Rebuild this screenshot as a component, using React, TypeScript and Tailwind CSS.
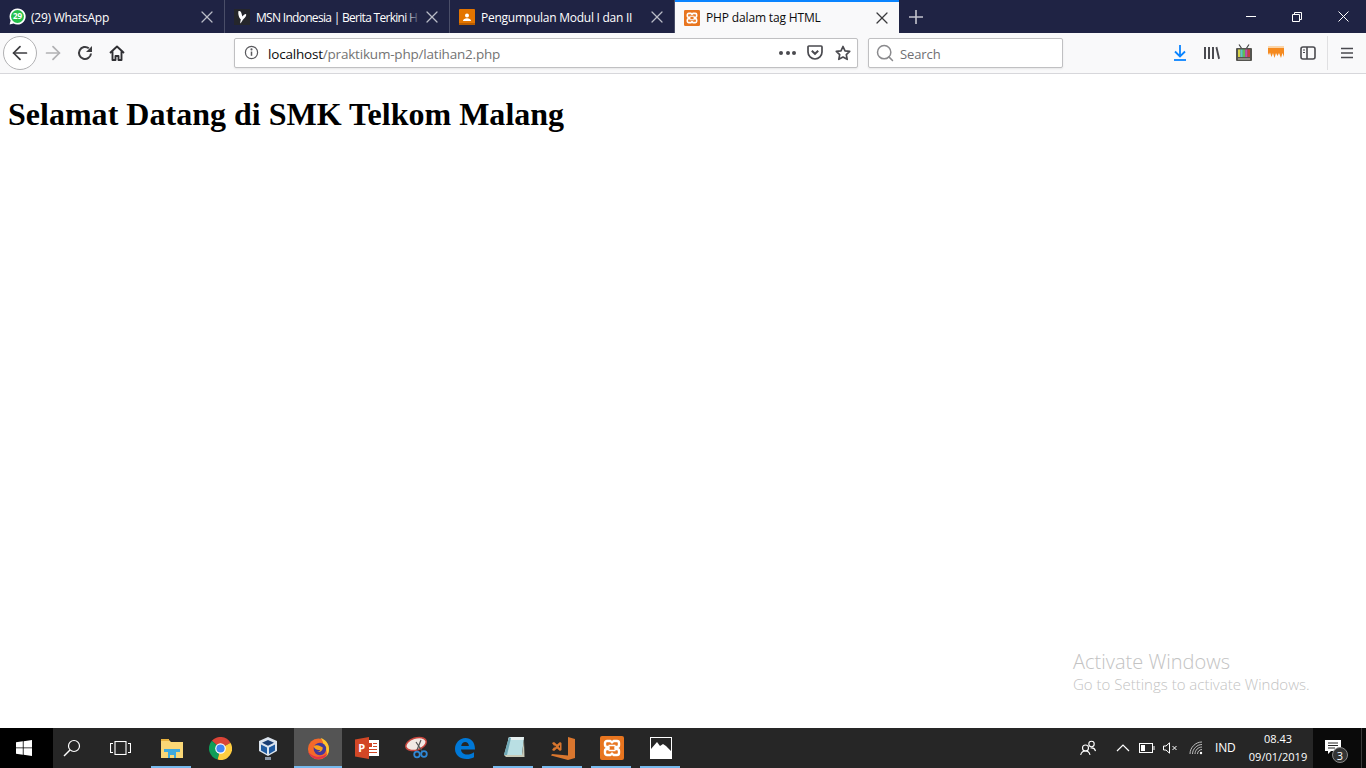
import { ArrowLeft, ArrowRight, Search, X } from 'lucide-react'
import type { ReactNode } from 'react'

const ui = { fontFamily: '"Open Sans", "Noto Sans", sans-serif' }

function XamppIcon({ size = 16 }: { size?: number }) {
  return (
    <svg width={size} height={size} viewBox="0 0 24 24">
      <rect width="24" height="24" rx="2" fill="#e8751f" />
      <path
        d="M7 5h3.500L12 6.500 13.500 5H17a2 2 0 0 1 2 2v2a2 2 0 0 1-2 2h-1.500v2H17a2 2 0 0 1 2 2v2a2 2 0 0 1-2 2h-3.500L12 17.500 10.500 19H7a2 2 0 0 1-2-2v-2a2 2 0 0 1 2-2h1.500v-2H7a2 2 0 0 1-2-2V7a2 2 0 0 1 2-2z"
        fill="none"
        stroke="#fff"
        strokeWidth="2.400"
        strokeLinejoin="round"
      />
      <path d="M8.500 9.500h7M8.500 14.500h7" stroke="#fff" strokeWidth="1.600" />
    </svg>
  )
}

function WhatsAppIcon() {
  return (
    <svg width="17" height="17" viewBox="0 0 17 17">
      <path d="M8.5 .5a8 8 0 0 0-6.900 12L.6 16.400l4-1a8 8 0 1 0 3.900-14.900z" fill="#fff" />
      <circle cx="8.500" cy="8.500" r="6.500" fill="#25c04a" />
      <text x="8.500" y="11.300" textAnchor="middle" fontSize="8" fontWeight="700" fill="#fff" fontFamily="Open Sans, sans-serif">29</text>
    </svg>
  )
}

function MsnIcon() {
  return (
    <svg width="16" height="16" viewBox="0 0 16 16">
      <rect width="16" height="16" fill="#25262b" />
      <path d="M4.500 2c1.500-.5 2.800.5 3.300 3.500.3 1 .5 1.500.7 2C9.500 6 10.500 5 11.800 5c1 .5.200 2.500-1 3.800-1 1-2 1.800-2.500 3L6.500 14.500c-.5-1 0-2.500.4-4C5 9 3.800 5 4.500 2z" fill="#fff" />
    </svg>
  )
}

function ClassroomIcon() {
  return (
    <svg width="16" height="16" viewBox="0 0 16 16">
      <rect width="16" height="16" rx="1" fill="#e37400" />
      <circle cx="8" cy="6.500" r="2" fill="#fff" />
      <path d="M4 12c0-2 2-2.800 4-2.800s4 .8 4 2.800z" fill="#fff" />
      <rect y="14" width="16" height="2" fill="#b85c00" />
    </svg>
  )
}

function Tab({ icon, title, active, fade }: { icon: ReactNode; title: string; active?: boolean; fade?: boolean }) {
  return (
    <div
      className={
        active
          ? 'flex h-[33px] w-[224px] items-center border-t-2 border-[#0a84ff] bg-[#f9f9fa] pl-[9px] text-[#0c0c0d]'
          : 'flex h-[33px] w-[225px] items-center border-r border-[#4a4e68] pl-[9px] text-white'
      }
    >
      <span className="flex w-[22px] shrink-0">{icon}</span>
      <span
        className={
          active
            ? 'relative w-[163px] shrink-0 overflow-hidden whitespace-nowrap pt-px text-[12px] tracking-[-0.15px]'
            : fade
              ? 'relative w-[165px] shrink-0 overflow-hidden whitespace-nowrap pt-[2px] text-[12px] tracking-[-0.7px]'
              : 'relative w-[163px] shrink-0 overflow-hidden whitespace-nowrap pt-[2px] text-[12px] tracking-[-0.25px]'
        }
      >
        {title}
        {fade && <span className="absolute right-0 top-0 h-full w-4 bg-gradient-to-r from-transparent to-[#1f2344]" />}
      </span>
      <X size={20} strokeWidth={1.500} className={active ? 'ml-[3px] shrink-0 text-[#3a3a3c]' : fade ? 'ml-[1px] shrink-0 text-[#b9bbc6]' : 'ml-[3px] shrink-0 text-[#b9bbc6]'} />
    </div>
  )
}

function TitleBar() {
  return (
    <div className="flex h-[33px] items-center bg-[#1f2344]">
      <Tab icon={<WhatsAppIcon />} title="(29) WhatsApp" />
      <Tab icon={<MsnIcon />} title="MSN Indonesia | Berita Terkini H" fade />
      <Tab icon={<ClassroomIcon />} title="Pengumpulan Modul I dan II" />
      <Tab icon={<XamppIcon />} title="PHP dalam tag HTML" active />
      <svg width="16" height="16" viewBox="0 0 16 16" className="ml-[9px]">
        <path d="M8 1v14M1 8h14" stroke="#c3c4cd" strokeWidth="1.600" />
      </svg>
      <div className="ml-auto flex h-full items-center">
        <div className="flex w-[46px] justify-center">
          <div className="h-px w-[10px] bg-white" />
        </div>
        <div className="flex w-[46px] justify-center">
          <svg width="10" height="10" viewBox="0 0 10 10" fill="none" stroke="#fff">
            <path d="M.5 2.500h7v7h-7zM2.500 2.500v-2h7v7h-2" />
          </svg>
        </div>
        <div className="flex w-[46px] justify-center">
          <svg width="11" height="11" viewBox="0 0 11 11" stroke="#fff">
            <path d="M.5.500l10 10M10.500.500l-10 10" />
          </svg>
        </div>
      </div>
    </div>
  )
}

function LibraryIcon() {
  return (
    <svg width="16" height="14" viewBox="0 0 16 14" fill="#4a4a4f">
      <path d="M0 1h2v12H0zM4 1h2v12H4zM8 1h2v12H8zM11.500 1.400l1.800-.7L16 12.600l-1.800.7z" />
    </svg>
  )
}

function TvIcon() {
  return (
    <svg width="16" height="17" viewBox="0 0 16 17">
      <path d="M6 5L3 .5M10 5l3-4.500" stroke="#444" strokeWidth="1.200" />
      <rect y="4" width="16" height="13" rx="1" fill="#54544f" />
      <rect x="2" y="5.500" width="2.400" height="7.500" fill="#d8d34a" />
      <rect x="4.400" y="5.500" width="2.400" height="7.500" fill="#5cc8c8" />
      <rect x="6.800" y="5.500" width="2.400" height="7.500" fill="#5fbf55" />
      <rect x="9.200" y="5.500" width="2.400" height="7.500" fill="#c04fb0" />
      <rect x="11.600" y="5.500" width="2.400" height="7.500" fill="#c8413c" />
      <rect x="2" y="14" width="12" height="2" fill="#8c8c84" />
    </svg>
  )
}

function MeltIcon() {
  return (
    <svg width="16" height="13" viewBox="0 0 16 13">
      <rect width="16" height="2" fill="#fbd5a8" />
      <path d="M0 2h16v9l-1.500-4-1.500 5-2-5-1.500 3-1.500-3-1.500 5L5 7l-1.500 4L2 6.500 1 9 0 7z" fill="#f58a1f" />
    </svg>
  )
}

function Toolbar() {
  return (
    <div className="flex h-[41px] items-center border-b border-[#d7d7db] bg-[#f9f9fa] pb-px">
      <div className="ml-[3px] flex h-[34px] w-[34px] shrink-0 items-center justify-center rounded-full border border-[#b1b1b3] bg-white">
        <ArrowLeft size={22} strokeWidth={1.900} className="text-[#3d3d40]" />
      </div>
      <ArrowRight size={22} strokeWidth={1.900} className="ml-[5px] text-[#b1b1b3]" />
      <svg width="16" height="16" viewBox="0 0 16 16" fill="none" className="ml-[13px]">
        <path d="M14 8.500A6 6 0 1 1 11.800 3.300" stroke="#3d3d40" strokeWidth="2" />
        <path d="M15 1v6H9z" fill="#3d3d40" />
      </svg>
      <svg width="16" height="16" viewBox="0 0 16 16" fill="none" className="ml-[16px]">
        <path d="M1 8l7-6.500L15 8M3.500 6.500V15h3v-4h3v4h3V6.500" stroke="#2f2f33" strokeWidth="1.900" strokeLinejoin="round" />
      </svg>
      <div className="ml-[109px] flex h-[30px] w-[624px] items-center rounded-[2px] border border-[#c0c0c2] bg-white pl-[9px] pr-[6px] shadow-[0_1px_2px_rgba(0,0,0,0.08)]">
        <svg width="15" height="15" viewBox="0 0 16 16" fill="none" stroke="#5a5a5e" strokeWidth="1.300">
          <circle cx="8" cy="8" r="6.500" />
          <path d="M8 7v4.500" strokeWidth="1.600" />
          <circle cx="8" cy="4.700" r=".5" fill="#5a5a5e" />
        </svg>
        <span className="ml-[9px] pt-[3px] text-[13.500px] tracking-[-0.2px] text-[#0c0c0d]">localhost</span>
        <span className="pt-[3px] text-[13.500px] tracking-[-0.2px] text-[#737373]">/praktikum-php/latihan2.php</span>
        <div className="ml-auto flex gap-[2.500px]">
          <div className="h-1 w-1 rounded-full bg-[#4a4a4f]" />
          <div className="h-1 w-1 rounded-full bg-[#4a4a4f]" />
          <div className="h-1 w-1 rounded-full bg-[#4a4a4f]" />
        </div>
        <svg width="16" height="15" viewBox="0 0 16 15" fill="none" stroke="#4a4a4f" strokeWidth="1.700" className="ml-[11px]">
          <path d="M1.900 1h12.200c.5 0 .9.400.9.900V7a7 7 0 0 1-14 0V1.900c0-.5.400-.9.900-.9z" />
          <path d="M4.800 5.800L8 8.800l3.200-3" strokeWidth="2" />
        </svg>
        <svg width="16" height="16" viewBox="0 0 16 16" fill="none" stroke="#4a4a4f" strokeWidth="1.700" className="ml-[12px]">
          <path d="M8 1.500l2 4.300 4.700.6-3.400 3.200.9 4.700L8 12l-4.200 2.300.9-4.700L1.300 6.400 6 5.800z" strokeLinejoin="round" />
        </svg>
      </div>
      <div className="ml-[10px] flex h-[30px] w-[195px] items-center rounded-[2px] border border-[#c0c0c2] bg-white pl-[6px] shadow-[0_1px_2px_rgba(0,0,0,0.08)]">
        <Search size={20} strokeWidth={1.800} className="text-[#8a8a8d]" />
        <span className="ml-[5px] pt-[5px] text-[13px] tracking-[-0.1px] text-[#6f6f73]">Search</span>
      </div>
      <svg width="14" height="16" viewBox="0 0 14 16" fill="none" stroke="#0a84ff" strokeWidth="1.800" className="ml-[110px]">
        <path d="M7 0v11M2 6.500L7 11.500l5-5" />
        <path d="M1 15h12" />
      </svg>
      <span className="ml-[17px] flex"><LibraryIcon /></span>
      <span className="ml-[16px] flex"><TvIcon /></span>
      <span className="ml-[16px] flex"><MeltIcon /></span>
      <svg width="16" height="14" viewBox="0 0 16 14" fill="none" stroke="#4a4a4f" strokeWidth="1.600" className="ml-[16px]">
        <rect x="1" y="1" width="14" height="12" rx="2" />
        <path d="M7 1v12" />
        <path d="M3 4h2M3 6.500h2" strokeWidth="1.200" />
      </svg>
      <div className="ml-[11px] h-[34px] w-px bg-[#e0e0e2]" />
      <svg width="12" height="12" viewBox="0 0 12 12" stroke="#4a4a4f" strokeWidth="1.700" className="ml-[13px]">
        <path d="M0 1.500h12M0 6h12M0 10.500h12" />
      </svg>
    </div>
  )
}

function TaskIcon({ children, open, selected }: { children: ReactNode; open?: boolean; selected?: boolean }) {
  return (
    <div className={selected ? 'relative flex h-10 w-[48px] items-center justify-center bg-[#545454]' : 'relative flex h-10 w-[49px] items-center justify-center'}>
      {children}
      {open && <div className={selected ? 'absolute bottom-0 inset-x-0 h-[2px] bg-[#76b9ed]' : 'absolute bottom-0 left-[4px] h-[2px] w-[40px] bg-[#76b9ed]'} />}
    </div>
  )
}

function Taskbar() {
  return (
    <div className="flex h-10 items-center bg-[#262626] text-white">
      <div className="flex h-10 w-[53px] items-center bg-black pl-[16px]">
        <svg width="16" height="16" viewBox="0 0 16 16" fill="#fff">
          <path d="M0 2.300l6.800-1v6.200H0zM7.600 1.200L16 0v7.500H7.600zM0 8.300h6.800v6.400l-6.800-1zM7.600 8.300H16V16l-8.400-1.200z" />
        </svg>
      </div>
      <div className="flex w-[38px] justify-center">
        <svg width="18" height="18" viewBox="0 0 18 18" fill="none" stroke="#fff" strokeWidth="1.200">
          <circle cx="11" cy="7" r="5.500" />
          <path d="M7 11l-6 6" strokeWidth="1.500" />
        </svg>
      </div>
      <div className="flex w-[56px] justify-center pl-[2px]">
        <svg width="21" height="14" viewBox="0 0 21 14" fill="none" stroke="#fff" strokeWidth="1.100">
          <rect x="5" y=".5" width="11" height="13" />
          <path d="M3 2.500H.5v9H3M18 2.500h2.500v9H18" />
        </svg>
      </div>
      <div className="flex">
        <TaskIcon open>
          <svg width="22" height="20" viewBox="0 0 22 20">
            <path d="M0 2h8l2 2h12v16H0z" fill="#fad776" />
            <rect y="1" width="8" height="2" fill="#e8b23f" />
            <rect x="3" y="11" width="16" height="3" fill="#3fa9dc" />
            <path d="M7 14h8v6h-2v-3H9v3H7z" fill="#3fa9dc" />
          </svg>
        </TaskIcon>
        <TaskIcon>
          <svg width="23" height="23" viewBox="0 0 24 24">
            <path d="M12 12L22.400 6A12 12 0 0 0 3 4z" fill="#db4437" />
            <path d="M12 12L3 4A12 12 0 0 0 9 23.600z" fill="#0f9d58" />
            <path d="M12 12l-3 11.600A12 12 0 0 0 22.400 6z" fill="#ffcd40" />
            <circle cx="12" cy="12" r="5.500" fill="#fff" />
            <circle cx="12" cy="12" r="4.300" fill="#4285f4" />
          </svg>
        </TaskIcon>
        <TaskIcon>
          <svg width="22" height="25" viewBox="0 0 22 25" className="-ml-[3px]">
            <path d="M11 1l9 4v10l-9 5-9-5V5z" fill="#dbe4ee" />
            <path d="M11 4l6 2.800-6 3-6-3z" fill="#183d73" />
            <path d="M4 8.500l6 3V18l-6-3.500zM18 8.500l-6 3V18l6-3.500z" fill="#1e5aa0" />
            <path d="M8 21h6v3H8z" fill="#8b98a8" />
          </svg>
        </TaskIcon>
        <TaskIcon open selected>
          <svg width="23" height="23" viewBox="0 0 24 24">
            <circle cx="12" cy="12.500" r="11" fill="#f4682a" />
            <path d="M14 1c5 1 9 6 9 11.500 0 3-1 6-3 8 1.500-4 .5-9-3-11.500 .5-3-1-6-3-8z" fill="#ffc52f" />
            <circle cx="13.500" cy="12.500" r="6.500" fill="#43389a" />
            <path d="M7 10c2-2 5-1.500 6.500-.5l3 1.500c0 3.500-3 5.500-6 4.500 2 0 3-1 3-2-3 .5-5.500-1-6.500-3.500z" fill="#f9a11b" />
            <path d="M1.300 15c1 5 6 8 11 8 5 0 8-3 9-6-3 3-9 4.500-13 3-3-1-6-3-7-5z" fill="#e0344a" />
          </svg>
        </TaskIcon>
        <TaskIcon>
          <svg width="24" height="22" viewBox="0 0 24 22">
            <rect x="10" y="3" width="14" height="16" fill="#fff" />
            <path d="M14 6h3v4h-3zM18 6h4v1h-4zM18 9h4v1h-4zM14 12h8v1h-8zM14 15h8v1h-8z" fill="#d24726" />
            <path d="M0 2.500L14 0v22L0 19.500z" fill="#d24726" />
            <text x="6.800" y="15" textAnchor="middle" fontSize="11" fontWeight="700" fill="#fff" fontFamily="Open Sans, sans-serif">P</text>
          </svg>
        </TaskIcon>
        <TaskIcon>
          <svg width="25" height="24" viewBox="0 0 25 24" className="ml-[3px]">
            <ellipse cx="11" cy="8" rx="10.500" ry="6" fill="#f2e9e4" stroke="#c8473f" strokeWidth="1.500" transform="rotate(-18 11 8)" />
            <path d="M11 6l6 9M16 4l-4 10" stroke="#555" strokeWidth="1.200" />
            <circle cx="12" cy="18.500" r="2.800" fill="none" stroke="#2f88d6" strokeWidth="1.800" />
            <circle cx="19" cy="18" r="2.800" fill="none" stroke="#2f88d6" strokeWidth="1.800" />
          </svg>
        </TaskIcon>
        <TaskIcon>
          <svg width="20" height="21" viewBox="0 0 20 21">
            <path d="M10.500 0C16 0 20 4 20 11.500H6c.2 3.500 3 5 6 5 2.500 0 5-.8 7-2.300v5C17 20.300 14.500 21 11.500 21 5 21 0 17 0 11 0 5 4.500 0 10.500 0zM6.200 8h7.700C13.700 5.500 12.200 4 10.200 4 8.200 4 6.700 5.500 6.200 8z" fill="#0078d7" />
          </svg>
        </TaskIcon>
        <TaskIcon open>
          <svg width="24" height="24" viewBox="0 0 24 24">
            <path d="M7 1h15l-2 18H2z" fill="#b9dfe3" />
            <path d="M7 1h15l-.5 3H6z" fill="#e6f0f0" />
            <path d="M2 19h18l2-15 .5 17H4z" fill="#c9cbb8" />
            <path d="M2 19l5-18 2 1-4 17z" fill="#6fa8b5" />
          </svg>
        </TaskIcon>
        <TaskIcon open>
          <svg width="24" height="23" viewBox="0 0 24 23" fill="#d9762e">
            <path d="M17 0l7 2v19l-7 2L0 18.500l1-1.500 16 1.500V0z" />
            <path d="M1 6l2-1 3 2.500L9 5l1.500 1v7L9 14l-3-2.500L3 14l-2-1 2.500-3.500zM3.500 8v3L5 9.500zM7.500 9.500L9 11V8z" />
          </svg>
        </TaskIcon>
        <TaskIcon open>
          <XamppIcon size={24} />
        </TaskIcon>
        <TaskIcon open>
          <svg width="22" height="22" viewBox="0 0 22 22">
            <rect x=".5" y=".5" width="21" height="21" fill="#262626" stroke="#fff" />
            <path d="M1 21V12l6-7 3 4 3-2 3 2 5 5v7z" fill="#fff" />
          </svg>
        </TaskIcon>
      </div>
      <div className="ml-auto flex h-10 items-center">
        <svg width="16" height="16" viewBox="0 0 16 16" fill="none" stroke="#fff" strokeWidth="1.100">
          <circle cx="5.500" cy="8" r="3" />
          <path d="M.7 15c.5-2.500 2.500-4 4.800-4s4 1.300 4.500 4" />
          <circle cx="11.500" cy="4" r="2.700" />
          <path d="M10.500 8c2.500-.5 4.500 1 5 3" />
        </svg>
        <svg width="14" height="8" viewBox="0 0 14 8" fill="none" stroke="#fff" strokeWidth="1.200" className="ml-[20px]">
          <path d="M1 7l6-6 6 6" />
        </svg>
        <svg width="16" height="10" viewBox="0 0 16 10" fill="none" stroke="#fff" className="ml-[9px]">
          <rect x=".5" y=".5" width="13" height="9" />
          <rect x="2" y="2" width="4" height="6" fill="#fff" stroke="none" />
          <path d="M15 3v4" />
        </svg>
        <svg width="15" height="12" viewBox="0 0 15 12" fill="none" stroke="#fff" className="ml-[8px]">
          <path d="M.5 4h2.500L6.500.8v10.400L3 8H.5z" />
          <path d="M9.500 4l4 4M13.500 4l-4 4" />
        </svg>
        <svg width="14" height="14" viewBox="0 0 14 14" fill="none" stroke="#cfcfcf" strokeWidth=".9" className="ml-[11px]">
          <path d="M1 13C1 6.500 6.500 1 13 1M3.500 13C3.500 8 8 3.500 13 3.500M6 13c0-3.800 3.200-7 7-7M8.500 13c0-2.500 2-4.500 4.500-4.500" />
          <circle cx="12" cy="12" r="1.200" fill="#fff" stroke="none" />
        </svg>
        <span className="ml-[12px] w-[28px] text-[12px] tracking-[-0.2px]">IND</span>
        <div className="flex w-[70px] flex-col items-center text-[11px] leading-[18px]">
          <span>08.43</span>
          <span>09/01/2019</span>
        </div>
        <div className="relative flex h-10 w-[48px] items-center justify-center bg-[#0a0a0a]">
          <svg width="16" height="15" viewBox="0 0 16 15" className="-ml-[8px] -mt-[2px]">
            <path d="M0 0h16v11H6l-3 3v-3H0z" fill="#fff" />
            <path d="M3 3h10M3 5.500h10M3 8h7" stroke="#262626" />
          </svg>
          <div className="absolute bottom-[5px] right-[13px] flex h-4 w-4 items-center justify-center rounded-full border border-[#888] bg-[#333] text-[11px] leading-none">
            3
          </div>
        </div>
        <div className="h-10 w-px bg-[#3a3a3a]" />
        <div className="h-10 w-[4px] bg-[#0a0a0a]" />
      </div>
    </div>
  )
}

export default function App() {
  return (
    <div className="flex h-[768px] w-[1366px] flex-col overflow-hidden bg-white" style={ui}>
      <TitleBar />
      <Toolbar />
      <main className="relative flex-1">
        <h1 className="m-[8px] mt-[22px] font-['Liberation_Serif',serif] text-[32px] font-bold leading-[37px] tracking-[0.015px] text-black">
          Selamat Datang di SMK Telkom Malang
        </h1>
        <div className="absolute bottom-[34px] left-[1073px] whitespace-nowrap text-[#c3c3c3]">
          <div className="text-[20px] font-light leading-[27px]">Activate Windows</div>
          <div className="text-[15px] font-light leading-[19px]">Go to Settings to activate Windows.</div>
        </div>
      </main>
      <Taskbar />
    </div>
  )
}
